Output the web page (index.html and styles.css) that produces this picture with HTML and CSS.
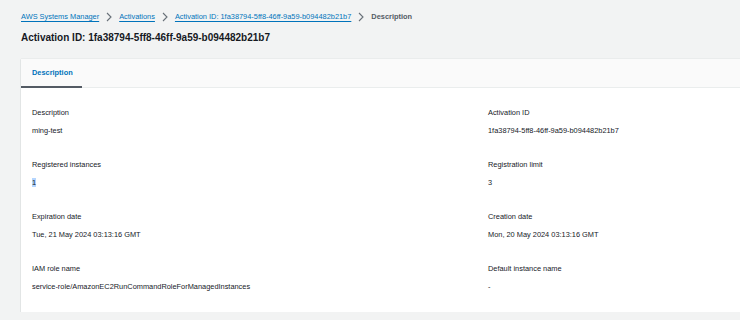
FILE: index.html
```html
<!DOCTYPE html>
<html lang="en">
<head>
  <meta charset="UTF-8" />
  <title>Activation ID: 1fa38794-5ff8-46ff-9a59-b094482b21b7</title>
  <link rel="stylesheet" href="styles.css">
</head>
<body>
  <div class="page">
    <nav class="breadcrumbs">
      <a href="#">AWS Systems Manager</a>
      <svg class="chev" viewBox="0 0 8 10" width="8" height="10"><path d="M2 1l4 4-4 4" /></svg>
      <a href="#">Activations</a>
      <svg class="chev" viewBox="0 0 8 10" width="8" height="10"><path d="M2 1l4 4-4 4" /></svg>
      <a href="#">Activation ID: 1fa38794-5ff8-46ff-9a59-b094482b21b7</a>
      <svg class="chev" viewBox="0 0 8 10" width="8" height="10"><path d="M2 1l4 4-4 4" /></svg>
      <span class="current">Description</span>
    </nav>

    <h1 class="page-title">Activation ID: 1fa38794-5ff8-46ff-9a59-b094482b21b7</h1>

    <div class="card">
      <div class="tabs">
        <div class="tab active">Description</div>
      </div>
      <div class="details">
        <div class="field">
          <div class="label">Description</div>
          <div class="value">ming-test</div>
        </div>
        <div class="field">
          <div class="label">Activation ID</div>
          <div class="value">1fa38794-5ff8-46ff-9a59-b094482b21b7</div>
        </div>
        <div class="field">
          <div class="label">Registered instances</div>
          <div class="value"><span class="selected">1</span></div>
        </div>
        <div class="field">
          <div class="label">Registration limit</div>
          <div class="value">3</div>
        </div>
        <div class="field">
          <div class="label">Expiration date</div>
          <div class="value">Tue, 21 May 2024 03:13:16 GMT</div>
        </div>
        <div class="field">
          <div class="label">Creation date</div>
          <div class="value">Mon, 20 May 2024 03:13:16 GMT</div>
        </div>
        <div class="field">
          <div class="label">IAM role name</div>
          <div class="value">service-role/AmazonEC2RunCommandRoleForManagedInstances</div>
        </div>
        <div class="field">
          <div class="label">Default instance name</div>
          <div class="value">-</div>
        </div>
      </div>
    </div>
  </div>
</body>
</html>
```

FILE: styles.css
```css
* {
  box-sizing: border-box;
}
html, body {
  margin: 0;
  padding: 0;
  font-family: 'Liberation Sans', Arial, sans-serif;
  background: #f2f3f3;
  color: #16191f;
  overflow: hidden;
}

.page {
  padding: 11px 0 0 21px;
}

.breadcrumbs {
  display: flex;
  align-items: center;
  gap: 5px;
  font-size: 7.4px;
  height: 11px;
}

.breadcrumbs a {
  color: #0073bb;
  text-decoration: underline;
  text-decoration-thickness: 0.5px;
  text-underline-offset: 1.5px;
}

.breadcrumbs .chev {
  width: 8px;
  height: 10px;
  margin: 0 1px;
}

.chev path {
  fill: none;
  stroke: #687078;
  stroke-width: 1.1;
}

.breadcrumbs .current {
  color: #545b64;
  font-weight: bold;
}

.page-title {
  margin: 9px 0 0;
  font-size: 10px;
  font-weight: bold;
  line-height: 14px;
}

.card {
  margin-top: 14px;
  background: #fff;
  box-shadow: 0 1px 1px rgba(0, 31, 51, 0.2), 0 0 1px rgba(0, 31, 51, 0.2);
  height: 253px;
}

.tabs {
  display: flex;
  background: #fafafa;
  height: 29px;
  border-bottom: 1px solid #eaeded;
}

.tab {
  padding: 0 11px;
  width: 61px;
  font-size: 7.4px;
  font-weight: bold;
  line-height: 28px;
  height: 29px;
}

.tab.active {
  color: #0073bb;
  border-bottom: 2px solid #545b64;
}

.details {
  display: grid;
  grid-template-columns: 456px 1fr;
  row-gap: 24px;
  padding: 20px 11px 0;
}

.field {
  display: flex;
  flex-direction: column;
  gap: 8px;
}

.label {
  font-size: 7.4px;
  line-height: 10px;
  color: #16191f;
}

.value {
  font-size: 7.4px;
  line-height: 10px;
  color: #16191f;
}

.selected {
  background: #b4d5fe;
}
```
